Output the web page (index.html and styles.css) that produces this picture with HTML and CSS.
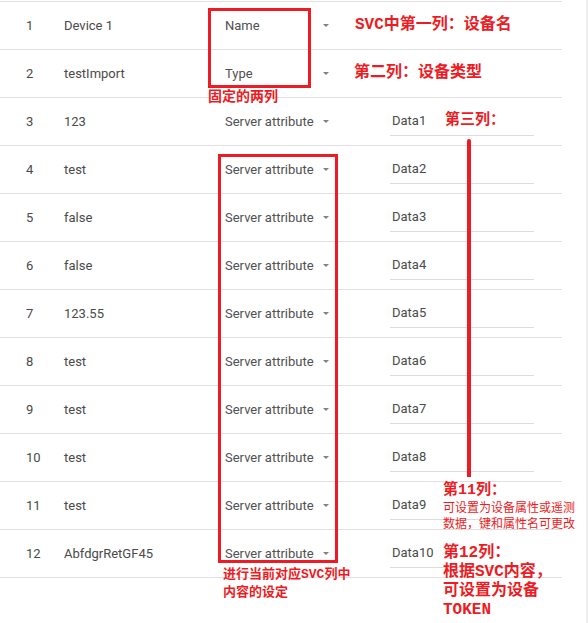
FILE: index.html
```html
<!DOCTYPE html>
<html>
<head>
<meta charset="utf-8">
<link rel="stylesheet" href="styles.css">
</head>
<body>
<div class="page">
  <div class="table">
    <div class="row"><span class="num">1</span><span class="name">Device 1</span><span class="select"><span class="label">Name</span><span class="arrow"></span></span><span class="data"></span></div>
    <div class="row"><span class="num">2</span><span class="name">testImport</span><span class="select"><span class="label">Type</span><span class="arrow"></span></span><span class="data"></span></div>
    <div class="row"><span class="num">3</span><span class="name">123</span><span class="select"><span class="label">Server attribute</span><span class="arrow"></span></span><span class="data"><span class="input">Data1</span></span></div>
    <div class="row"><span class="num">4</span><span class="name">test</span><span class="select"><span class="label">Server attribute</span><span class="arrow"></span></span><span class="data"><span class="input">Data2</span></span></div>
    <div class="row"><span class="num">5</span><span class="name">false</span><span class="select"><span class="label">Server attribute</span><span class="arrow"></span></span><span class="data"><span class="input">Data3</span></span></div>
    <div class="row"><span class="num">6</span><span class="name">false</span><span class="select"><span class="label">Server attribute</span><span class="arrow"></span></span><span class="data"><span class="input">Data4</span></span></div>
    <div class="row"><span class="num">7</span><span class="name">123.55</span><span class="select"><span class="label">Server attribute</span><span class="arrow"></span></span><span class="data"><span class="input">Data5</span></span></div>
    <div class="row"><span class="num">8</span><span class="name">test</span><span class="select"><span class="label">Server attribute</span><span class="arrow"></span></span><span class="data"><span class="input">Data6</span></span></div>
    <div class="row"><span class="num">9</span><span class="name">test</span><span class="select"><span class="label">Server attribute</span><span class="arrow"></span></span><span class="data"><span class="input">Data7</span></span></div>
    <div class="row"><span class="num">10</span><span class="name">test</span><span class="select"><span class="label">Server attribute</span><span class="arrow"></span></span><span class="data"><span class="input">Data8</span></span></div>
    <div class="row"><span class="num">11</span><span class="name">test</span><span class="select"><span class="label">Server attribute</span><span class="arrow"></span></span><span class="data"><span class="input">Data9</span></span></div>
    <div class="row"><span class="num">12</span><span class="name">AbfdgrRetGF45</span><span class="select"><span class="label">Server attribute</span><span class="arrow"></span></span><span class="data"><span class="input">Data10</span></span></div>
  </div>
  <div class="spacer"></div>
  <div class="edge"></div>

  <div class="box box-fixed"></div>
  <div class="box box-type"></div>
  <div class="vline"></div>

  <div class="note note-1">SVC中第一列：设备名</div>
  <div class="note note-2">第二列：设备类型</div>
  <div class="note note-fixed">固定的两列</div>
  <div class="note note-3">第三列：</div>
  <div class="note note-11">第11列：<div class="small">可设置为设备属性或遥测<br>数据，键和属性名可更改</div></div>
  <div class="note note-12">第12列：<br>根据SVC内容，<br>可设置为设备<br>TOKEN</div>
  <div class="note note-set">进行当前对应SVC列中<br>内容的设定</div>
</div>
</body>
</html>
```

FILE: styles.css
```css
html, body {
  margin: 0;
  background: #fff;
}

body {
  font-family: Roboto, "Noto Sans", sans-serif;
  font-size: 13px;
  color: #4a4a4a;
}

.page {
  position: relative;
  display: flex;
  width: 588px;
  height: 623px;
  overflow: hidden;
}

.table {
  width: 562px;
  margin-top: 1px;
  border-top: 1px solid #e0e0e0;
  align-self: flex-start;
}

.row {
  display: grid;
  grid-template-columns: 64px 161px 165px 144px;
  align-items: center;
  height: 47px;
  border-bottom: 1px solid #e0e0e0;
}

.num {
  padding-left: 26px;
}

.select {
  display: flex;
  align-items: center;
  justify-content: space-between;
  width: 104px;
  margin-top: -1px;
}

.label {
  color: #505050;
}

.arrow {
  width: 0;
  height: 0;
  border-left: 3px solid transparent;
  border-right: 3px solid transparent;
  border-top: 3px solid #808080;
  margin-top: 1px;
}

.data {
  align-self: end;
  margin-bottom: 9px;
}

.input {
  display: block;
  height: 26px;
  line-height: 24px;
  padding-left: 2px;
  border-bottom: 1px solid #dcdcdc;
}

.spacer {
  flex: 1;
}

.edge {
  width: 2px;
  background: #f0f0f0;
}

.box {
  position: absolute;
  border: 3px solid #ed1c24;
  box-sizing: border-box;
}

.box-fixed {
  left: 208px;
  top: 8px;
  width: 103px;
  height: 80px;
}

.box-type {
  left: 218px;
  top: 154px;
  width: 120px;
  height: 409px;
}

.vline {
  position: absolute;
  left: 467px;
  top: 139px;
  width: 4px;
  height: 338px;
  background: #ed1c24;
  border-radius: 2px 2px 0 0;
}

.note {
  position: absolute;
  color: #ed1c24;
  font-family: "Liberation Mono", "Noto Sans CJK SC", monospace;
  font-weight: bold;
  white-space: nowrap;
}

.note-1 {
  left: 355px;
  top: 15px;
  font-size: 16px;
  line-height: 20px;
}

.note-2 {
  left: 354px;
  top: 63px;
  font-size: 16px;
  line-height: 20px;
}

.note-fixed {
  left: 208px;
  top: 88px;
  font-size: 14px;
  line-height: 18px;
}

.note-3 {
  left: 445px;
  top: 111px;
  font-size: 15px;
  line-height: 20px;
}

.note-11 {
  left: 443px;
  top: 481px;
  font-size: 15px;
  line-height: 20px;
}

.small {
  font-size: 12px;
  line-height: 16px;
  font-weight: normal;
}

.note-12 {
  left: 443px;
  top: 544px;
  font-size: 16px;
  line-height: 19px;
}

.note-set {
  left: 223px;
  top: 566px;
  font-size: 13px;
  line-height: 18px;
}
```
